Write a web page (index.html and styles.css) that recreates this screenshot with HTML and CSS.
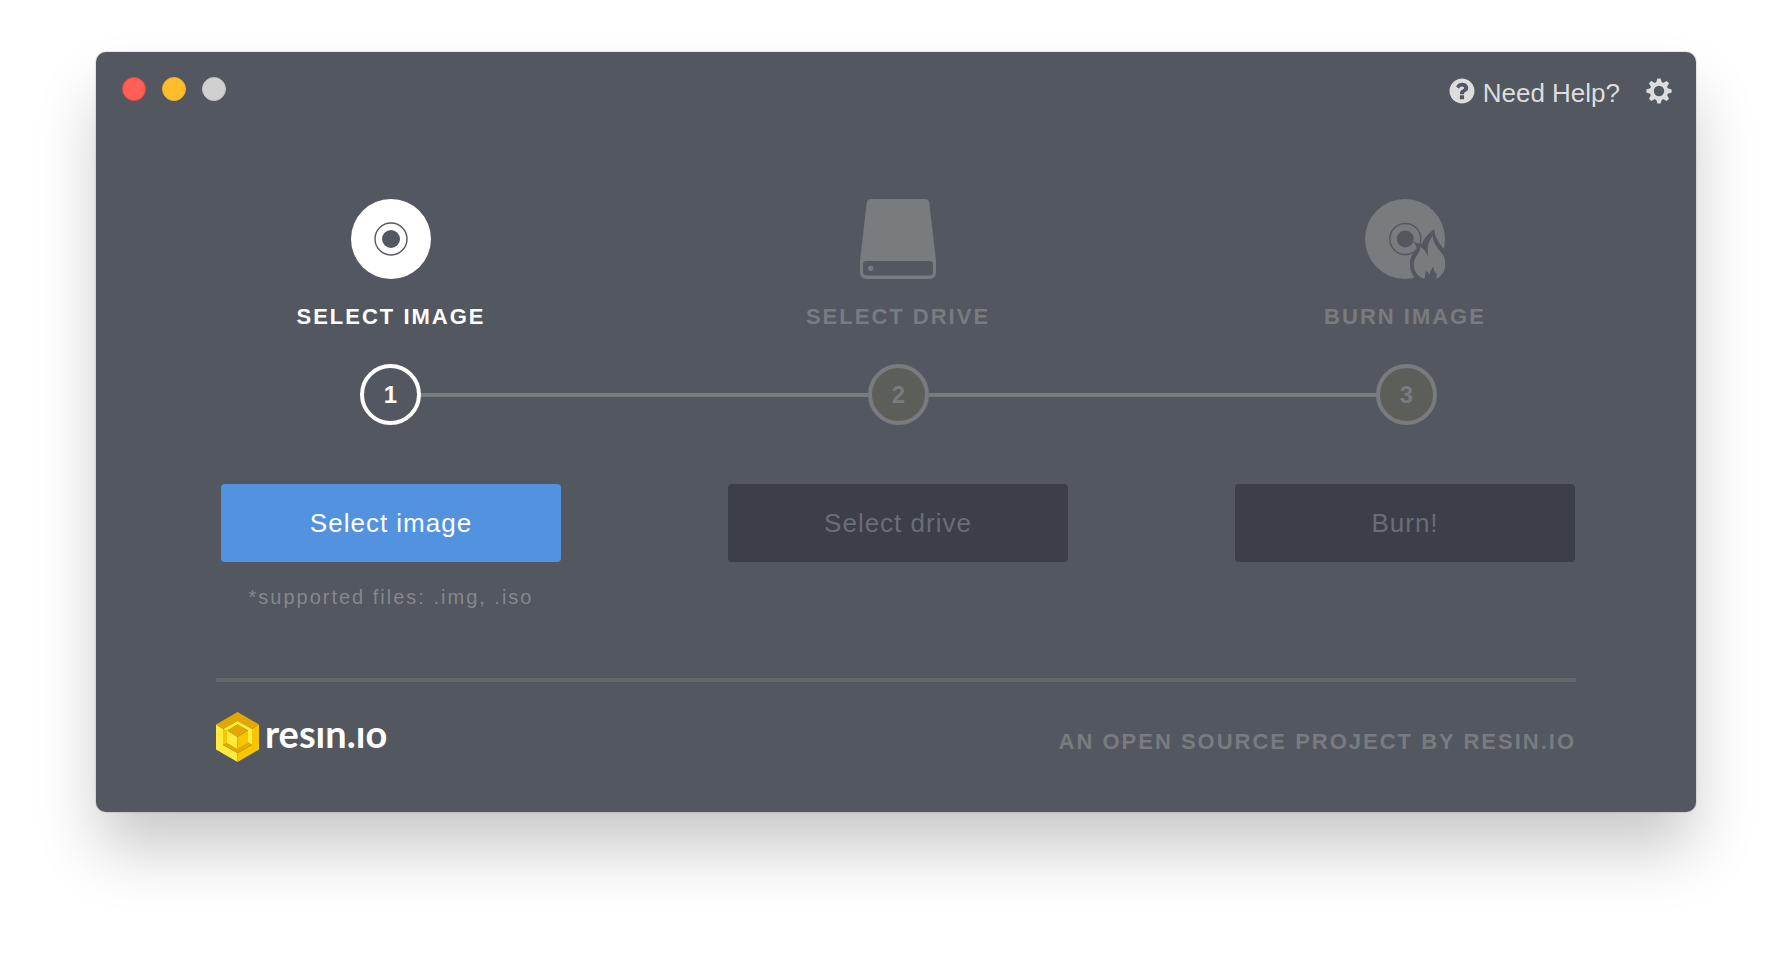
FILE: index.html
```html
<!DOCTYPE html>
<html lang="en">
<head>
<meta charset="utf-8">
<title>Etcher</title>
<meta name="viewport" content="width=device-width, initial-scale=1">
<link rel="stylesheet" href="styles.css">
</head>
<body>
<div class="window">
  <header class="titlebar">
    <div class="lights">
      <button class="light light-close" type="button" aria-label="Close"></button>
      <button class="light light-minimize" type="button" aria-label="Minimize"></button>
      <button class="light light-zoom" type="button" aria-label="Zoom" disabled></button>
    </div>
    <div class="tools">
      <a class="help" href="#help">
        <svg class="tool-icon" viewBox="98 98 1596 1596" aria-hidden="true"><path d="M1024 1376v-192q0-14-9-23t-23-9h-192q-14 0-23 9t-9 23v192q0 14 9 23t23 9h192q14 0 23-9t9-23zm256-672q0-88-55.5-163t-138.5-116-170-41q-243 0-371 213-15 24 8 42l132 100q7 6 19 6 16 0 25-12 53-68 86-92 34-24 86-24 48 0 85.500 26t37.500 59q0 38-20 61t-68 45q-63 28-115.500 86.500t-52.500 125.500v36q0 14 9 23t23 9h192q14 0 23-9t9-23q0-19 21.500-49.500t54.500-49.500q32-18 49-28.500t46-35 44.500-48 28-60.500 12.500-81zm384 192q0 209-103 385.500t-279.500 279.500-385.500 103-385.500-103-279.500-279.500-103-385.500 103-385.500 279.500-279.500 385.500-103 385.500 103 279.500 279.500 103 385.500z"/></svg>
        <span>Need Help?</span>
      </a>
      <button class="settings" type="button" aria-label="Settings">
        <svg class="tool-icon" viewBox="-13 -13 26 26" aria-hidden="true">
          <circle r="7.200" fill="none" stroke="currentColor" stroke-width="4"/>
          <path id="tooth" d="M-3-8L-1.600-12.600H1.600L3-8Z"/>
          <use href="#tooth" transform="rotate(45)"/>
          <use href="#tooth" transform="rotate(90)"/>
          <use href="#tooth" transform="rotate(135)"/>
          <use href="#tooth" transform="rotate(180)"/>
          <use href="#tooth" transform="rotate(225)"/>
          <use href="#tooth" transform="rotate(270)"/>
          <use href="#tooth" transform="rotate(315)"/>
        </svg>
      </button>
    </div>
  </header>

  <main class="content">
    <div class="row">
      <section class="step step-active">
        <svg class="step-icon" viewBox="0 0 80 80" aria-hidden="true">
          <circle cx="40" cy="40" r="40"/>
          <circle class="cut-line" cx="40" cy="40" r="16"/>
          <circle class="cut" cx="40" cy="40" r="9"/>
        </svg>
        <h2 class="step-title">SELECT IMAGE</h2>
      </section>
      <section class="step">
        <svg class="step-icon" viewBox="-2 0 80 80" aria-hidden="true">
          <path d="M11 0H65Q69 0 69.300 4L76 62V73Q76 80 69 80H7Q0 80 0 73V62L6.700 4Q7 0 11 0Z"/>
          <rect class="cut" x="3" y="62" width="70" height="14.500" rx="3.500"/>
          <circle cx="10.700" cy="69.300" r="2.700"/>
        </svg>
        <h2 class="step-title">SELECT DRIVE</h2>
      </section>
      <section class="step">
        <svg class="step-icon" viewBox="0 0 80 80" aria-hidden="true">
          <circle cx="40" cy="40" r="40"/>
          <circle class="cut-line" cx="40.300" cy="40" r="15.500"/>
          <circle class="cut" cx="40.300" cy="40" r="8.500"/>
          <path class="cut" d="M48 42Q53 45.500 56.500 45Q61 36 69.300 30Q69 40 81 52V81H51Q44 72 45 62Q46 55 52 50Q51 46 48 42Z"/>
          <path d="M67.500 36.500C65 42 61 45 63.500 58.500Q61.500 52 55 47.500Q56 51 52.500 55.500Q48.500 61 48.700 66Q49 76 59.500 80Q60.500 75 61 71Q64 74 64.500 76.500Q65 71 68.500 67.500Q68 72 71.500 75V80Q80.500 75 80.500 64Q80 57 74 51Q68 44 67.500 36.500Z"/>
        </svg>
        <h2 class="step-title">BURN IMAGE</h2>
      </section>
    </div>

    <div class="progress">
      <span class="badge badge-active">1</span>
      <span class="connector"></span>
      <span class="badge">2</span>
      <span class="connector"></span>
      <span class="badge">3</span>
    </div>

    <div class="row">
      <div class="action">
        <button class="button button-primary" type="button">Select image</button>
        <p class="note">*supported files: .img, .iso</p>
      </div>
      <div class="action">
        <button class="button" type="button" disabled>Select drive</button>
      </div>
      <div class="action">
        <button class="button" type="button" disabled>Burn!</button>
      </div>
    </div>
  </main>

  <footer class="footer">
    <a class="logo" href="#resin" aria-label="resin.io">
      <svg class="logo-mark" viewBox="0 0 43 50" aria-hidden="true">
        <path fill="#e0a800" d="M21.500 0L43 12.500L36 17L21.500 9L7 17L0 12.500Z"/>
        <path fill="#ffeb3b" d="M0 12.500L7 17V33L21.500 41V50L0 37.500Z"/>
        <path fill="#f9c400" d="M43 12.500L36 17V33L21.500 41V50L43 37.500Z"/>
        <path fill="#f9c400" d="M7 17L11 19V31L7 33Z"/>
        <path fill="#ffeb3b" d="M21.500 9L36 17V33L32 30.500V18.500L21.500 12.500L11 19L7 17Z"/>
        <path fill="#e0a800" d="M7 33L11 30.500L21.500 36.500L32 30.500L36 33L21.500 41Z"/>
        <path fill="#e0a800" d="M21.500 12.500L32 18.500L21.500 25L11 18.500Z"/>
        <path fill="#ffeb3b" d="M11 18.500L21.500 25V37L11 31Z"/>
        <path fill="#f9c400" d="M32 18.500L21.500 25V37L32 31Z"/>
      </svg>
      <span class="logo-text">resın.ıo</span>
    </a>
    <p class="credit">AN OPEN SOURCE PROJECT BY RESIN.IO</p>
  </footer>
</div>
</body>
</html>
```

FILE: styles.css
```css
:root {
  --panel: #535760;
  --muted: #787c7f;
  --light: #dddddd;
}

* {
  box-sizing: border-box;
}

body {
  margin: 0;
  min-height: 100vh;
  padding: 52px 96px;
  background: #fff;
  font-family: "Liberation Sans", Arial, sans-serif;
}

h2,
p {
  margin: 0;
}

button {
  border: 0;
  padding: 0;
  font: inherit;
}

a {
  text-decoration: none;
}

svg {
  display: block;
  fill: currentColor;
}

.window {
  background: var(--panel);
  border-radius: 10px;
  box-shadow: 0 0 2px rgba(0, 0, 0, 0.3), 0 40px 64px -4px rgba(0, 0, 0, 0.22);
}

.titlebar {
  display: flex;
  justify-content: space-between;
  align-items: flex-start;
  padding: 25px 24px 0 26px;
}

.lights {
  display: flex;
  gap: 16px;
}

.light {
  width: 24px;
  height: 24px;
  border: 1px solid;
  border-radius: 50%;
}

.light-close {
  background: #ff5f57;
  border-color: #e9473f;
}

.light-minimize {
  background: #ffbd2e;
  border-color: #eeb02b;
}

.light-zoom {
  background: #d0d0d0;
  border-color: #c3c3c3;
}

.tools {
  display: flex;
  gap: 26px;
}

.help {
  display: flex;
  gap: 8px;
  color: var(--light);
  font-size: 26px;
  line-height: 32px;
}

.settings {
  background: none;
  color: var(--light);
  align-self: flex-start;
}

.tool-icon {
  width: 26px;
  height: 26px;
  margin-top: 1px;
}

.content {
  margin: 90px 120px 0;
  padding-bottom: 69px;
  border-bottom: 4px solid #65696b;
}

.row {
  display: flex;
  justify-content: space-between;
  padding: 0 1px 0 5px;
}

.step,
.action {
  width: 340px;
  display: flex;
  flex-direction: column;
  align-items: center;
}

.step {
  gap: 26px;
  color: var(--muted);
}

.step-active {
  color: #fff;
}

.step-icon {
  width: 80px;
  height: 80px;
}

.cut {
  fill: var(--panel);
}

.cut-line {
  fill: none;
  stroke: var(--panel);
  stroke-width: 1.4;
}

.step-title {
  font-size: 22px;
  line-height: 24px;
  letter-spacing: 2px;
}

.progress {
  display: flex;
  align-items: center;
  margin: 35px 0 59px;
  padding: 0 139px 0 144px;
}

.badge {
  display: flex;
  align-items: center;
  justify-content: center;
  width: 61px;
  height: 61px;
  border: 4px solid var(--muted);
  border-radius: 50%;
  background: #5c5e5a;
  color: var(--muted);
  font-size: 24px;
  font-weight: bold;
}

.badge-active {
  background: none;
  border-color: #fff;
  color: #fff;
}

.connector {
  flex: 1;
  height: 4px;
  background: var(--muted);
}

.action {
  gap: 23px;
}

.button {
  width: 100%;
  height: 78px;
  border-radius: 4px;
  background: #3c3f48;
  color: #696d76;
  font-size: 26px;
  letter-spacing: 1px;
}

.button-primary {
  background: #5392de;
  color: #fff;
}

.note {
  color: #85888b;
  font-size: 20px;
  line-height: 24px;
  letter-spacing: 2px;
}

.footer {
  display: flex;
  justify-content: space-between;
  align-items: flex-end;
  padding: 30px 120px 50px;
}

.logo {
  display: flex;
  align-items: flex-start;
  gap: 6px;
  color: #fff;
}

.logo-mark {
  width: 43px;
  height: 50px;
}

.logo-text {
  font-family: Lato, "Liberation Sans", sans-serif;
  font-size: 38px;
  font-weight: bold;
  line-height: 42px;
}

.credit {
  color: var(--muted);
  font-size: 22px;
  font-weight: bold;
  line-height: 40px;
  letter-spacing: 2px;
}
```
